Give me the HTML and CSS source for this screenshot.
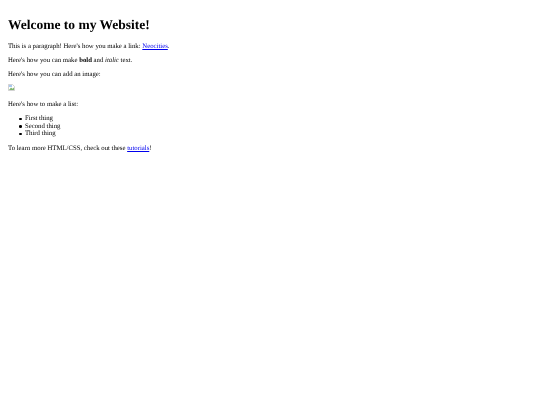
FILE: index.html
```html
<!DOCTYPE html>
<html>
<head>
<meta charset="utf-8">
<title>Welcome</title>
<link rel="stylesheet" href="styles.css">
</head>
<body>
<h1>Welcome to my Website!</h1>
<p>This is a paragraph! Here's how you make a link: <a href="#">Neocities</a>.</p>
<p>Here's how you can make <strong>bold</strong> and <em>italic</em> text.</p>
<p>Here's how you can add an image:</p>
<p class="image-line"><svg class="broken" viewBox="0 0 7 7"><path d="M.5.5h4l2 2v4h-6z" fill="#fff" stroke="#b5b5b5" stroke-width=".6"/><path d="M1 1h3v2H1z" fill="#a9c8f0"/><path d="M1 6l2-2.5 1.5 1.2L6 3.5V6z" fill="#7fb56f"/></svg></p>
<p>Here's how to make a list:</p>
<ul>
<li>First thing</li>
<li>Second thing</li>
<li>Third thing</li>
</ul>
<p>To learn more HTML/CSS, check out these <a href="#">tutorials</a>!</p>
</body>
</html>
```
FILE: styles.css
```css
body {
  margin: 8px;
  font-family: "Liberation Serif", serif;
  font-size: 6.75px;
  line-height: 7.5px;
  background: #fff;
  color: #000;
  text-rendering: geometricPrecision;
  filter: blur(0.25px);
}
h1 {
  font-size: 13.5px;
  line-height: 15.5px;
  margin: 9px 0 10px;
}
p {
  margin: 6.9px 0;
}
ul {
  margin: 6.9px 0;
  padding-left: 17px;
  list-style: none;
}
li {
  display: flex;
  align-items: center;
}
li::before {
  content: "";
  width: 2.5px;
  height: 2.5px;
  margin-left: -6px;
  margin-right: 3.5px;
  border-radius: 50%;
  background: #000;
}
a {
  color: #00e;
}
.image-line {
  display: flex;
  height: 8.5px;
}
.broken {
  width: 7px;
  height: 7px;
  margin-top: -2px;
}
```
